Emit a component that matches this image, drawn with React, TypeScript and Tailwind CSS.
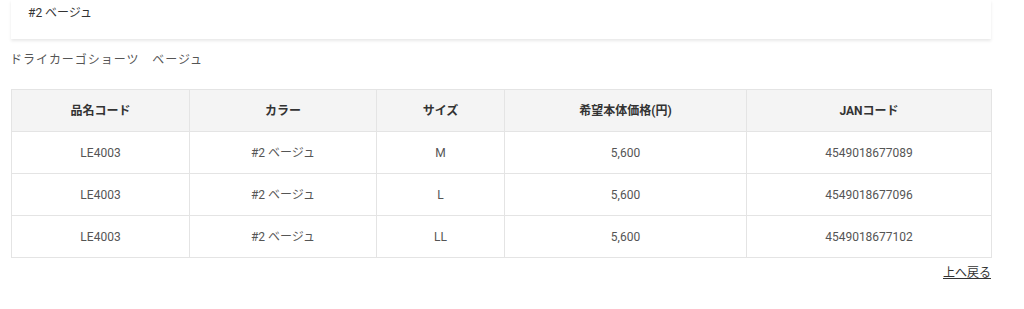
import React from "react";

const rows = [
  { code: "LE4003", color: "#2 ベージュ", size: "M", price: "5,600", jan: "4549018677089" },
  { code: "LE4003", color: "#2 ベージュ", size: "L", price: "5,600", jan: "4549018677096" },
  { code: "LE4003", color: "#2 ベージュ", size: "LL", price: "5,600", jan: "4549018677102" },
];

const font = {
  fontFamily: '"Roboto", "Noto Sans CJK JP", sans-serif',
};

export default function App() {
  return (
    <div className="w-[1024px] h-[309px] bg-white overflow-hidden text-[#555]" style={font}>
      <div className="ml-[11px] w-[980px]">
        <div className="h-[39px] bg-white shadow-[0_2px_3px_rgba(0,0,0,0.09)] pl-[17px] pt-[4px] text-[12px] leading-[18px] text-[#333]">
          #2 ベージュ
        </div>
        <div className="mt-[12px] text-[12px] leading-[18px] tracking-[0.08em] text-[#555] -ml-[1px]">
          ドライカーゴショーツ　ベージュ
        </div>
        <table className="mt-[20px] w-[980px] border-collapse table-fixed text-[12px]">
          <colgroup>
            <col className="w-[178px]" />
            <col className="w-[187px]" />
            <col className="w-[128px]" />
            <col className="w-[242px]" />
            <col className="w-[245px]" />
          </colgroup>
          <thead>
            <tr className="h-[42px] bg-[#f4f4f4]">
              {["品名コード", "カラー", "サイズ", "希望本体価格(円)", "JANコード"].map((h) => (
                <th key={h} className="border border-[#e4e4e4] font-bold text-[#333] text-center p-0">
                  {h}
                </th>
              ))}
            </tr>
          </thead>
          <tbody>
            {rows.map((r, i) => (
              <tr key={i} className="h-[42px]">
                <td className="border border-[#e4e4e4] text-center p-0">{r.code}</td>
                <td className="border border-[#e4e4e4] text-center p-0">{r.color}</td>
                <td className="border border-[#e4e4e4] text-center p-0">{r.size}</td>
                <td className="border border-[#e4e4e4] text-center p-0">{r.price}</td>
                <td className="border border-[#e4e4e4] text-center p-0">{r.jan}</td>
              </tr>
            ))}
          </tbody>
        </table>
        <div className="flex justify-end mt-[6px]">
          <a className="text-[12px] leading-[18px] underline text-[#333] cursor-pointer">上へ戻る</a>
        </div>
      </div>
    </div>
  );
}
